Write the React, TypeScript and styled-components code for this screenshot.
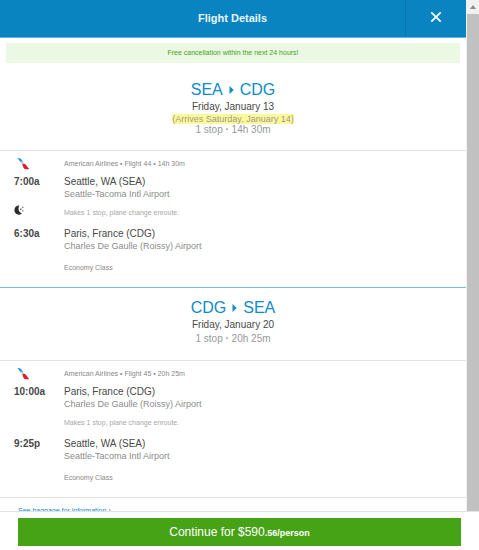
import React from "react";
import styled, { createGlobalStyle } from "styled-components";

const GlobalStyle = createGlobalStyle`
  * { box-sizing: border-box; }
  html, body, #root { height: 100%; }
  body {
    margin: 0;
    overflow: hidden;
    background: #fff;
    font-family: "Liberation Sans", Arial, sans-serif;
    color: #484848;
  }
  h1, h2, p { margin: 0; font-weight: normal; }
`;

const Page = styled.div`
  display: flex;
  flex-direction: column;
  height: 100vh;
`;

const Viewport = styled.div`
  display: flex;
  flex: 1;
  min-height: 0;
`;

const Content = styled.main`
  flex: 1;
  min-width: 0;
  overflow: hidden;
`;

const ScrollTrack = styled.div`
  display: flex;
  flex-direction: column;
  width: 13px;
  padding-left: 1px;
  background: #f1f1f1;
`;

const ScrollArrow = styled.div`
  display: flex;
  align-items: center;
  justify-content: center;
  height: 14px;
`;

const ScrollThumb = styled.div`
  flex: 1;
  background: #c1c1c1;
`;

const Header = styled.header`
  display: grid;
  grid-template-columns: 1fr 61px;
  height: 38px;
  background: #0a84c1;
  border-bottom: 1px solid #5fb7e6;
`;

const HeaderTitle = styled.h1`
  padding-left: 60px;
  font-size: 11px;
  font-weight: bold;
  line-height: 36px;
  text-align: center;
  color: #e8f5fc;
`;

const CloseButton = styled.button`
  display: flex;
  align-items: center;
  justify-content: center;
  padding: 0 0 4px;
  border: 0;
  border-left: 1px solid #0873a9;
  background: none;
`;

const Banner = styled.p`
  margin: 5px 6px 7px;
  background: #eaf8e4;
  color: #48a317;
  font-size: 7px;
  line-height: 20px;
  text-align: center;
`;

const LegHeader = styled.div`
  padding: 10px 0 14px;
  border-bottom: 1px solid #e2e2e2;
  text-align: center;
`;

const Route = styled.h2`
  display: flex;
  align-items: center;
  justify-content: center;
  gap: 6px;
  font-size: 16px;
  line-height: 20px;
  color: #0e8bcb;
`;

const TravelDate = styled.p`
  font-size: 10px;
  line-height: 14px;
`;

const Arrival = styled.p`
  display: flex;
  justify-content: center;
  font-size: 9px;
  line-height: 10px;
  color: #999;
`;

const Highlight = styled.mark`
  background: #fdfa96;
  color: inherit;
`;

const Duration = styled.p<{ $spaced?: boolean }>`
  font-size: 10px;
  line-height: ${(p) => (p.$spaced ? "14px" : "12px")};
  color: #999;
`;

const Segment = styled.div<{ $accent?: boolean }>`
  display: grid;
  grid-template-columns: 50px 1fr;
  padding: 6px 14px 12px;
  border-bottom: 1px solid ${(p) => (p.$accent ? "#73bfe6" : "#e2e2e2")};
`;

const LogoCell = styled.div`
  height: 18px;
  padding-left: 3px;
`;

const Flight = styled.p`
  font-size: 7px;
  line-height: 14px;
  color: #888;
`;

const Time = styled.p`
  font-size: 10px;
  font-weight: bold;
  line-height: 14px;
`;

const City = styled.p`
  font-size: 10px;
  line-height: 14px;
`;

const Airport = styled.p`
  font-size: 9px;
  line-height: 10px;
  color: #8c8c8c;
`;

const MoonCell = styled.div`
  height: 28px;
  padding-top: 3px;
`;

const Note = styled.p`
  font-size: 7px;
  line-height: 28px;
  color: #a8a8a8;
`;

const Cabin = styled.p`
  grid-column: 2;
  padding-top: 10px;
  font-size: 7px;
  line-height: 14px;
  color: #888;
`;

const BaggageLink = styled.a`
  display: block;
  padding: 7px 18px;
  font-size: 7px;
  line-height: 12px;
  color: #0e8bcb;
  text-decoration: none;
`;

const Footer = styled.footer`
  padding: 6px 18px 4px;
  border-top: 1px solid #e2e2e2;
`;

const ContinueButton = styled.button`
  display: block;
  width: 100%;
  height: 28px;
  padding: 0;
  border: 0;
  background: #47a316;
  color: #fff;
  font-family: inherit;
  font-size: 12px;
`;

const Cents = styled.span`
  font-size: 9px;
  font-weight: bold;
`;

const CloseIcon = () => (
  <svg width="12" height="12" viewBox="0 0 12 12" aria-hidden="true">
    <path d="M1.3 1.3 10.7 10.7M10.7 1.3 1.3 10.7" stroke="#fff" strokeWidth="1.7" />
  </svg>
);

const RouteArrow = () => (
  <svg width="5" height="8" viewBox="0 0 5 8" role="img" aria-label="to">
    <path d="M.5 0 4.7 4 .5 8Z" fill="#0e8bcb" />
  </svg>
);

const AirlineLogo = () => (
  <svg width="14" height="14" viewBox="0 0 14 14" role="img" aria-label="American Airlines">
    <path d="M.5 1C2.8.7 4.3 1.6 5.2 3.4L6.2 5.8 3.6 5.2Z" fill="#1b9ad6" />
    <path d="M3.3 4.4C5.2 4.1 6.6 5 6.9 6.4L5.5 8Z" fill="#b9cbd6" />
    <path d="M5.4 7.8C6 6.2 7.8 6.4 8.9 7.8L12.3 12.3H8.5C7.2 12.3 6.6 11.2 6.2 10.1Z" fill="#d9202e" />
  </svg>
);

const MoonIcon = () => (
  <svg width="11" height="11" viewBox="0 0 11 11" role="img" aria-label="Overnight">
    <path d="M5.4.6C3.9 3 4.2 7.6 7.9 8.4 5.2 10.9.4 9.5.4 5.3.4 2.3 2.6.3 5.4.6Z" fill="#2c2c2c" />
    <path d="M6 3.5h1.5V5H6zM8.2 1.8h1.2V3H8.2zM8.2 5.2h1.2v1.2H8.2z" fill="#666" />
  </svg>
);

type Stop = { time: string; city: string; airport: string };
type Leg = {
  from: string;
  to: string;
  date: string;
  arrives?: string;
  duration: string;
  flight: string;
  depart: Stop;
  arrive: Stop;
  overnight?: boolean;
};

const SEATTLE = { city: "Seattle, WA (SEA)", airport: "Seattle-Tacoma Intl Airport" };
const PARIS = { city: "Paris, France (CDG)", airport: "Charles De Gaulle (Roissy) Airport" };

const legs: Leg[] = [
  {
    from: "SEA",
    to: "CDG",
    date: "Friday, January 13",
    arrives: "(Arrives Saturday, January 14)",
    duration: "14h 30m",
    flight: "Flight 44",
    depart: { time: "7:00a", ...SEATTLE },
    arrive: { time: "6:30a", ...PARIS },
    overnight: true,
  },
  {
    from: "CDG",
    to: "SEA",
    date: "Friday, January 20",
    duration: "20h 25m",
    flight: "Flight 45",
    depart: { time: "10:00a", ...PARIS },
    arrive: { time: "9:25p", ...SEATTLE },
  },
];

const StopRow = ({ stop }: { stop: Stop }) => (
  <>
    <Time>{stop.time}</Time>
    <div>
      <City>{stop.city}</City>
      <Airport>{stop.airport}</Airport>
    </div>
  </>
);

const LegDetails = ({ leg }: { leg: Leg }) => (
  <section>
    <LegHeader>
      <Route>
        <span>{leg.from}</span>
        <RouteArrow />
        <span>{leg.to}</span>
      </Route>
      <TravelDate>{leg.date}</TravelDate>
      {leg.arrives && (
        <Arrival>
          <Highlight>{leg.arrives}</Highlight>
        </Arrival>
      )}
      <Duration $spaced={!leg.arrives}>
        1 stop <b>·</b> {leg.duration}
      </Duration>
    </LegHeader>
    <Segment $accent={leg.overnight}>
      <LogoCell>
        <AirlineLogo />
      </LogoCell>
      <Flight>
        American Airlines • {leg.flight} • {leg.duration}
      </Flight>
      <StopRow stop={leg.depart} />
      <MoonCell>{leg.overnight && <MoonIcon />}</MoonCell>
      <Note>Makes 1 stop, plane change enroute.</Note>
      <StopRow stop={leg.arrive} />
      <Cabin>Economy Class</Cabin>
    </Segment>
  </section>
);

export default function App() {
  return (
    <Page>
      <GlobalStyle />
      <Viewport>
        <Content>
          <Header>
            <HeaderTitle>Flight Details</HeaderTitle>
            <CloseButton type="button" aria-label="Close">
              <CloseIcon />
            </CloseButton>
          </Header>
          <Banner>Free cancellation within the next 24 hours!</Banner>
          {legs.map((leg) => (
            <LegDetails key={leg.flight} leg={leg} />
          ))}
          <BaggageLink href="#baggage">See baggage for information ›</BaggageLink>
        </Content>
        <ScrollTrack aria-hidden="true">
          <ScrollArrow>
            <svg width="6" height="4" viewBox="0 0 6 4">
              <path d="M0 4 3 0 6 4Z" fill="#8a8a8a" />
            </svg>
          </ScrollArrow>
          <ScrollThumb />
        </ScrollTrack>
      </Viewport>
      <Footer>
        <ContinueButton type="button">
          Continue for $590<Cents>.56/person</Cents>
        </ContinueButton>
      </Footer>
    </Page>
  );
}
